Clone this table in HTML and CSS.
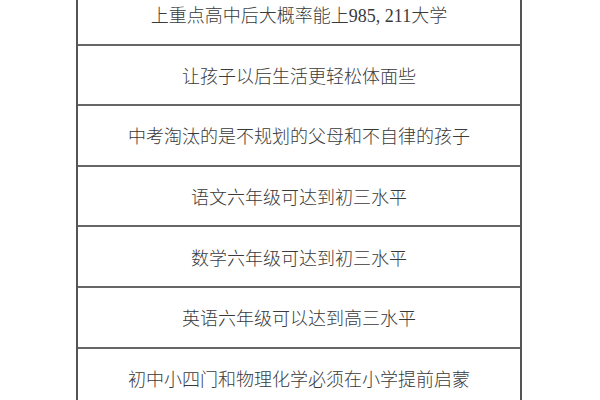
FILE: index.html
```html
<!DOCTYPE html>
<html lang="zh">
<head>
<meta charset="utf-8">
<link rel="stylesheet" href="styles.css">
</head>
<body>
<div class="table">
  <div class="row">上重点高中后大概率能上985, 211大学</div>
  <div class="row">让孩子以后生活更轻松体面些</div>
  <div class="row">中考淘汰的是不规划的父母和不自律的孩子</div>
  <div class="row">语文六年级可达到初三水平</div>
  <div class="row">数学六年级可达到初三水平</div>
  <div class="row">英语六年级可以达到高三水平</div>
  <div class="row">初中小四门和物理化学必须在小学提前启蒙</div>
</div>
</body>
</html>
```
FILE: styles.css
```css
html, body {
  margin: 0;
  padding: 0;
  background: #ffffff;
  overflow: hidden;
}
.table {
  width: 442px;
  margin: -17px 0 0 76px;
  border-left: 2px solid #555;
  border-right: 2px solid #555;
  border-top: 2px solid #666;
}
.row {
  height: 58.6px;
  border-bottom: 2px solid #666;
  display: flex;
  align-items: center;
  justify-content: center;
  font-family: "Liberation Serif", "Noto Sans CJK SC", serif;
  font-size: 18px;
  font-weight: 300;
  color: #3a3a3a;
}
```
